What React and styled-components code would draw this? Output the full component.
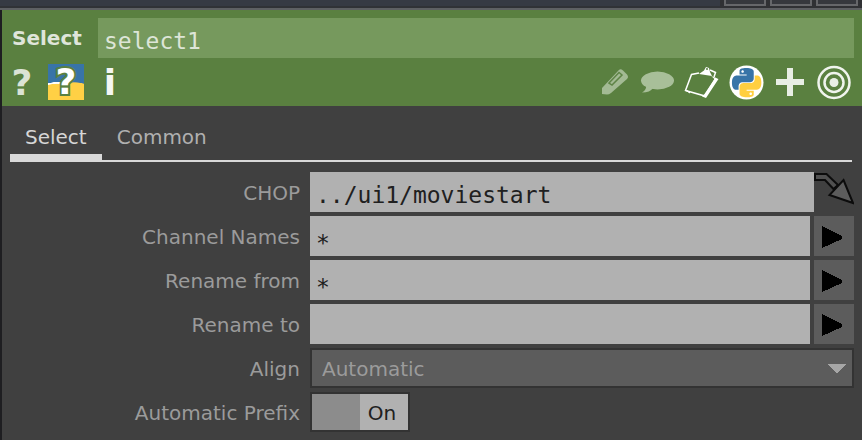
import React, { useState } from "react";
import styled, { createGlobalStyle } from "styled-components";

const GlobalStyle = createGlobalStyle`
  * { box-sizing: border-box; }
  body {
    margin: 0;
    background: #404040;
    font-family: "DejaVu Sans", Verdana, sans-serif;
    font-size: 20px;
    line-height: 24px;
  }
  button, input, select { font: inherit; border: 0; border-radius: 0; margin: 0; outline: none; }
`;

const Window = styled.div`
  display: flex;
  flex-direction: column;
  min-height: 100vh;
`;

const TitleStrip = styled.div`
  display: flex;
  justify-content: flex-end;
  gap: 4px;
  height: 10px;
  padding: 0 4px 2px 0;
  background: linear-gradient(#363a43 0 6px, #303236 6px 8px, #5e6063 8px);
`;

const TitleCell = styled.span`
  width: 42px;
  height: 6px;
  border: 2px solid #66676a;
  border-top: 0;
  background: #36383d;
  box-shadow: 0 0 0 4px #303134;
  clip-path: inset(0 -4px -2px -4px);
`;

const Panel = styled.main`
  flex: 1;
  border-left: 2px solid #1e1e21;
  background: #404040;
`;

const Header = styled.header`
  display: flex;
  flex-direction: column;
  gap: 4px;
  padding: 8px 8px 4px 0;
  background: #5a8040;
`;

const NameRow = styled.label`
  display: flex;
  align-items: center;
`;

const OperatorType = styled.span`
  flex: 0 0 96px;
  padding-left: 10px;
  color: #dfe5da;
  font-weight: bold;
`;

const TextField = styled.input`
  flex: 1;
  min-width: 0;
  height: 40px;
  padding: ${(p) => (p.$low ? "13px 6px 0" : "5px 6px 0")};
  background: ${(p) => (p.$header ? "#76995d" : "#b1b1b1")};
  color: ${(p) => (p.$header ? "#dde5d7" : "#202020")};
  font-family: "DejaVu Sans Mono", monospace;
  font-size: 23px;
`;

const Toolbar = styled.div`
  display: flex;
  justify-content: space-between;
`;

const ToolGroup = styled.div`
  display: flex;
  gap: 4px;
`;

const ToolButton = styled.button`
  display: flex;
  align-items: center;
  justify-content: center;
  width: 40px;
  height: 40px;
  padding: 2px 0 0;
  background: none;
  color: ${(p) => (p.$soft ? "#dbe3d5" : "#f5f7f3")};
  font-size: 36px;
  font-weight: bold;
  line-height: 38px;
`;

const PythonTile = styled.span`
  width: 36px;
  height: 36px;
  margin-bottom: 2px;
  background: radial-gradient(ellipse 26px 18px at 26px 36px, #ffd045 0 96%, transparent 100%),
    radial-gradient(ellipse 26px 18px at 9px 36px, #ffd045 0 88%, #fff 92% 98%, transparent 100%),
    #3874a8;
  color: #fff;
  line-height: 36px;
  -webkit-text-stroke: 4px #5a8040;
  paint-order: stroke fill;
`;

const Icon = styled.svg`
  display: block;
  flex: none;
  width: 40px;
  height: 40px;
`;

const Tabs = styled.nav`
  display: flex;
  height: 56px;
  margin: 0 10px 0 8px;
  padding-top: 14px;
  border-bottom: 2px solid #d9d9d9;
`;

const Tab = styled.button`
  height: 42px;
  padding: 0 15px;
  background: none;
  color: ${(p) => (p.$active ? "#d6d6d6" : "#b0b0b0")};
  border-bottom: ${(p) => (p.$active ? "8px solid #d9d9d9" : "8px solid transparent")};
`;

const Form = styled.form`
  display: flex;
  flex-direction: column;
  gap: 4px;
  padding: 10px 8px 8px 0;
`;

const Row = styled.div`
  display: flex;
`;

const RowLabel = styled.label`
  flex: 0 0 308px;
  padding-right: 10px;
  color: #9b9b9b;
  text-align: right;
  line-height: 42px;
  height: 40px;
`;

const SideButton = styled.button`
  flex: 0 0 40px;
  height: 40px;
  padding: 0;
  margin-left: ${(p) => (p.$plain ? "0" : "4px")};
  background: ${(p) => (p.$plain ? "none" : "#5c5c5c")};
`;

const Menu = styled.div`
  flex: 1;
  display: grid;
  align-items: center;
  height: 40px;
  border: 2px solid #333;
  background: #5c5c5c;
`;

const MenuSelect = styled.select`
  grid-area: 1 / 1;
  appearance: none;
  height: 36px;
  padding: 2px 40px 0 10px;
  background: transparent;
  color: #9b9b9b;
`;

const MenuArrow = styled.svg`
  grid-area: 1 / 1;
  justify-self: end;
  width: 18px;
  height: 10px;
  margin: 2px 6px 0 0;
  pointer-events: none;
`;

const Switch = styled.span`
  display: grid;
  grid-template-columns: 48px 48px;
  height: 40px;
  border: 2px solid #333;
  background: #8c8c8c;
`;

const SwitchInput = styled.input`
  grid-area: 1 / 1 / 2 / 3;
  appearance: none;
  cursor: pointer;
`;

const SwitchFace = styled.span`
  grid-area: ${(p) => (p.$on ? "1 / 2" : "1 / 1")};
  padding-right: 4px;
  background: #b1b1b1;
  color: #202020;
  text-align: center;
  line-height: 38px;
  height: 36px;
  pointer-events: none;
`;

const snake =
  "M14.25.18l.9.2.73.26.59.3.45.32.34.34.25.34.16.33.1.3.04.26.02.2-.01.13V8.5l-.05.63-.13.55-.21.46-.26.38-.3.31-.33.25-.35.19-.35.14-.33.1-.3.07-.26.04-.21.02H8.77l-.69.05-.59.14-.5.22-.41.27-.33.32-.27.35-.2.36-.15.37-.1.35-.07.32-.04.27-.02.21v3.06H3.17l-.21-.03-.28-.07-.32-.12-.35-.18-.36-.26-.36-.36-.35-.46-.32-.59-.28-.73-.21-.88-.14-1.05-.05-1.23.06-1.22.16-1.04.24-.87.32-.71.36-.57.4-.44.42-.33.42-.24.4-.16.36-.1.32-.05.24-.01h.16l.06.01h8.16v-.83H6.18l-.01-2.75-.02-.37.05-.34.11-.31.17-.28.25-.26.31-.23.38-.2.44-.18.51-.15.58-.12.64-.1.71-.06.77-.04.84-.02 1.27.05zm-6.3 1.98l-.23.33-.08.41.08.41.23.34.33.22.41.09.41-.09.33-.22.23-.34.08-.41-.08-.41-.23-.33-.33-.22-.41-.09-.41.09z";

const PencilIcon = () => (
  <Icon viewBox="0 0 40 40">
    <path d="M8 31V25L24 8Q26 5 29 7.500L33 11.500Q35 14 33 16L17 30Q15 31.500 13 31.500Z" fill="#a3ba94" />
    <path d="M15 20L25 9.500L28 12L18 22Z" stroke="#5f8447" strokeWidth="1.500" fill="none" />
  </Icon>
);

const CommentIcon = () => (
  <Icon viewBox="0 0 40 40">
    <ellipse cx="19.500" cy="17.500" rx="16.500" ry="9" fill="#a8bf99" />
    <path d="M8 22Q9 27 4 29.500Q12 29.500 15 25Z" fill="#a8bf99" />
  </Icon>
);

const ClipboardIcon = () => (
  <Icon viewBox="0 0 40 40">
    <path d="M17 10L9.500 11.500L3.500 27.500L23 33L34 15" fill="none" stroke="#fff" strokeWidth="1.500" />
    <path d="M29 13L36.500 16L24 35L20 33.500L22.500 31L32.500 16Z" fill="#fff" />
    <path d="M17 11L22 7.500L24 4L27 5L28 9L30 13Z" fill="#fff" />
    <circle cx="25" cy="6" r="1" fill="#5a8040" />
    <path d="M28 7L33.500 9.500L32 14" fill="none" stroke="#fff" strokeWidth="1.500" />
    <path d="M6 28L8 30L3 27Z" fill="#fff" stroke="#fff" />
  </Icon>
);

const PythonIcon = () => (
  <Icon viewBox="0 0 40 40">
    <circle cx="20.500" cy="19.500" r="17" fill="#fff" />
    <g transform="translate(6 5) scale(1.220)">
      <path d={snake} fill="#3874a8" />
      <path d={snake} transform="rotate(180 12 12)" fill="#ffcf40" />
    </g>
  </Icon>
);

const PlusIcon = () => (
  <Icon viewBox="0 0 40 40">
    <path d="M17 5H23V16H34V22H23V33H17V22H6V16H17Z" fill="#e8eee4" />
  </Icon>
);

const TargetIcon = () => (
  <Icon viewBox="0 0 40 40">
    <g fill="none" stroke="#f0f4ed" strokeWidth="2.500">
      <circle cx="20" cy="19.500" r="15.500" />
      <circle cx="20" cy="19.500" r="9.500" />
    </g>
    <circle cx="20" cy="19.500" r="4.500" fill="#e8eee4" />
  </Icon>
);

const JumpIcon = () => (
  <Icon viewBox="0 0 40 40">
    <path d="M1 2H12.500L24 13L19.500 17L11 8H1Z" fill="#505050" stroke="#0c0c0c" strokeWidth="2" />
    <path d="M29.500 8L39 31L15.500 23Z" fill="#5c5c5c" stroke="#0c0c0c" strokeWidth="2" />
  </Icon>
);

const PlayIcon = () => (
  <Icon viewBox="0 0 40 40" shapeRendering="crispEdges">
    <path d="M8 10L28 20V23L8 32Z" fill="#000" />
  </Icon>
);

const textRows = [
  { id: "channels", label: "Channel Names", value: "*" },
  { id: "from", label: "Rename from", value: "*" },
  { id: "to", label: "Rename to", value: "" },
];

const tools = [
  ["Edit", PencilIcon],
  ["Comment", CommentIcon],
  ["Clipboard", ClipboardIcon],
  ["Python", PythonIcon],
  ["Add", PlusIcon],
  ["Target", TargetIcon],
];

export default function App() {
  const [tab, setTab] = useState("Select");
  const [prefix, setPrefix] = useState(true);

  return (
    <Window>
      <GlobalStyle />
      <TitleStrip>
        <TitleCell />
        <TitleCell />
        <TitleCell />
      </TitleStrip>
      <Panel>
        <Header>
          <NameRow>
            <OperatorType>Select</OperatorType>
            <TextField $header defaultValue="select1" spellCheck={false} />
          </NameRow>
          <Toolbar>
            <ToolGroup>
              <ToolButton $soft aria-label="Help">?</ToolButton>
              <ToolButton aria-label="Python help">
                <PythonTile>?</PythonTile>
              </ToolButton>
              <ToolButton aria-label="Info">i</ToolButton>
            </ToolGroup>
            <ToolGroup>
              {tools.map(([name, Glyph]) => (
                <ToolButton key={name} aria-label={name}>
                  <Glyph />
                </ToolButton>
              ))}
            </ToolGroup>
          </Toolbar>
        </Header>
        <Tabs>
          {["Select", "Common"].map((name) => (
            <Tab key={name} $active={tab === name} onClick={() => setTab(name)}>
              {name}
            </Tab>
          ))}
        </Tabs>
        <Form onSubmit={(e) => e.preventDefault()}>
          <Row>
            <RowLabel htmlFor="chop">CHOP</RowLabel>
            <TextField id="chop" defaultValue="../ui1/moviestart" spellCheck={false} />
            <SideButton $plain type="button" aria-label="Go to operator">
              <JumpIcon />
            </SideButton>
          </Row>
          {textRows.map((row) => (
            <Row key={row.id}>
              <RowLabel htmlFor={row.id}>{row.label}</RowLabel>
              <TextField $low id={row.id} defaultValue={row.value} />
              <SideButton type="button" aria-label={`${row.label} menu`}>
                <PlayIcon />
              </SideButton>
            </Row>
          ))}
          <Row>
            <RowLabel htmlFor="align">Align</RowLabel>
            <Menu>
              <MenuSelect id="align">
                <option>Automatic</option>
              </MenuSelect>
              <MenuArrow viewBox="0 0 18 10" shapeRendering="crispEdges">
                <path d="M0 0H18L9 10Z" fill="#a6a6a6" />
              </MenuArrow>
            </Menu>
          </Row>
          <Row>
            <RowLabel htmlFor="prefix">Automatic Prefix</RowLabel>
            <Switch>
              <SwitchInput
                type="checkbox"
                id="prefix"
                checked={prefix}
                onChange={(e) => setPrefix(e.target.checked)}
              />
              <SwitchFace $on={prefix}>{prefix ? "On" : "Off"}</SwitchFace>
            </Switch>
          </Row>
        </Form>
      </Panel>
    </Window>
  );
}
